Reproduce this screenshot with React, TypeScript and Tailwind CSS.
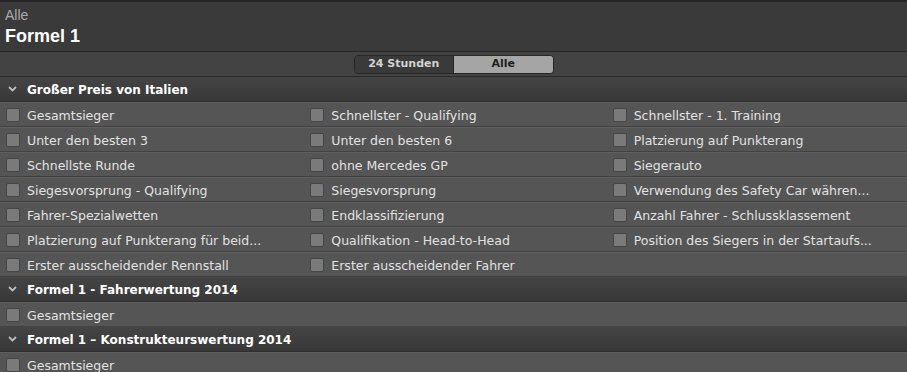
import React from 'react';

type Section = {
  title: string;
  items: string[];
};

const sections: Section[] = [
  {
    title: 'Großer Preis von Italien',
    items: [
      'Gesamtsieger',
      'Schnellster - Qualifying',
      'Schnellster - 1. Training',
      'Unter den besten 3',
      'Unter den besten 6',
      'Platzierung auf Punkterang',
      'Schnellste Runde',
      'ohne Mercedes GP',
      'Siegerauto',
      'Siegesvorsprung - Qualifying',
      'Siegesvorsprung',
      'Verwendung des Safety Car währen...',
      'Fahrer-Spezialwetten',
      'Endklassifizierung',
      'Anzahl Fahrer - Schlussklassement',
      'Platzierung auf Punkterang für beid...',
      'Qualifikation - Head-to-Head',
      'Position des Siegers in der Startaufs...',
      'Erster ausscheidender Rennstall',
      'Erster ausscheidender Fahrer',
    ],
  },
  { title: 'Formel 1 - Fahrerwertung 2014', items: ['Gesamtsieger'] },
  { title: 'Formel 1 – Konstrukteurswertung 2014', items: ['Gesamtsieger'] },
];

const Chevron = () => (
  <svg width="9" height="6" viewBox="0 0 9 6" className="shrink-0">
    <path d="M1 1 L4.5 4.5 L8 1" fill="none" stroke="#bdbdbd" strokeWidth="1.8" />
  </svg>
);

const Row: React.FC<{ items: string[] }> = ({ items }) => (
  <div className="grid grid-cols-3 h-[25px] bg-[#555555] border-t border-t-[#5f5f5f] border-b border-b-[#424242]">
    {items.map((label, i) => (
      <div key={i} className={`flex items-center gap-[7px] ${i === 2 ? 'pl-[8px]' : i === 1 ? 'pl-[8px]' : 'pl-[6px]'}`}>
        <span className="block w-[14px] h-[14px] rounded-[2px] bg-[#7a7a7a] border border-[#454545] shrink-0" />
        <span className="text-[12.5px] leading-[16px] pt-[2px] text-[#e2e2e2] whitespace-nowrap">{label}</span>
      </div>
    ))}
  </div>
);

const App: React.FC = () => {
  return (
    <div className="w-[907px] h-[372px] overflow-hidden bg-[#3c3c3c] font-['DejaVu_Sans',sans-serif]">
      <div className="h-[52px] border-t-2 border-t-[#252525] bg-[#3a3a3a] px-[5px] pt-[5px] font-['Liberation_Sans',sans-serif] border-b border-b-[#262626]">
        <div className="text-[14px] leading-[16px] text-[#a9a9a9]">Alle</div>
        <div className="text-[18px] leading-[24px] mt-[1px] text-white font-semibold">Formel 1</div>
      </div>

      <div className="h-[25px] bg-[#434343] flex items-center justify-center border-b border-b-[#2a2a2a]">
        <div className="flex h-[19px] w-[200px] rounded-[4px] border border-[#262626] overflow-hidden text-[11px] font-bold">
          <div className="flex-1 flex items-center justify-center bg-[#3a3a3a] text-[#d2d2d2]">24 Stunden</div>
          <div className="flex-1 flex items-center justify-center bg-[#a5a5a5] text-[#1f1f1f] border-l border-l-[#262626]">Alle</div>
        </div>
      </div>

      {sections.map((s) => {
        const rows: string[][] = [];
        for (let i = 0; i < s.items.length; i += 3) rows.push(s.items.slice(i, i + 3));
        return (
          <div key={s.title}>
            <div className="h-[25px] flex items-center gap-[10px] pl-[8px] bg-gradient-to-b from-[#444444] to-[#383838] border-b border-b-[#2e2e2e]">
              <Chevron />
              <span className="text-[12px] leading-[16px] pt-[1px] font-bold text-white">{s.title}</span>
            </div>
            {rows.map((r, i) => (
              <Row key={i} items={r} />
            ))}
          </div>
        );
      })}
    </div>
  );
};

export default App;
